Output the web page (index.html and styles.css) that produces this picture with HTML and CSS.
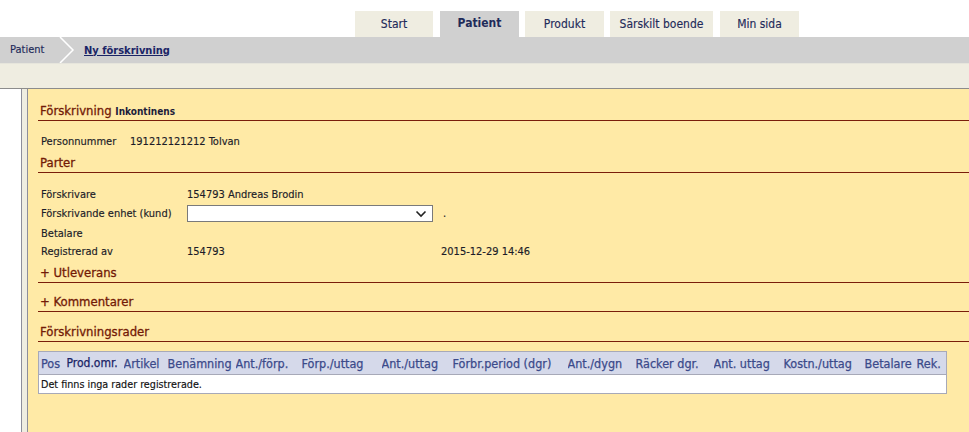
FILE: index.html
```html
<!DOCTYPE html>
<html lang="sv">
<head>
<meta charset="utf-8">
<title>Ny förskrivning</title>
<link rel="stylesheet" href="styles.css">
</head>
<body>
<div class="top">
  <nav class="tabs">
    <a class="tab tab-start">Start</a>
    <a class="tab tab-active">Patient</a>
    <a class="tab">Produkt</a>
    <a class="tab tab-wide">Särskilt boende</a>
    <a class="tab">Min sida</a>
  </nav>
</div>
<div class="crumbs">
  <span class="crumb">Patient</span>
  <svg class="chev" width="16" height="26" viewBox="0 0 16 26"><polyline points="1,0 14,13 1,26" fill="none" stroke="#ffffff" stroke-width="1.5"/></svg>
  <a class="crumb-current">Ny förskrivning</a>
</div>
<div class="subbar"></div>
<div class="main">
  <div class="leftcol"></div>
  <div class="panel">
    <div class="head head-first"><span class="head-title">Förskrivning</span> <span class="head-sub">Inkontinens</span></div>
    <div class="row row-person"><span class="lbl lbl-short">Personnummer</span><span>191212121212 Tolvan</span></div>
    <div class="head head-parter"><span class="head-title">Parter</span></div>
    <div class="grid">
      <div class="row"><span class="lbl">Förskrivare</span><span>154793 Andreas Brodin</span></div>
      <div class="row row-select"><span class="lbl">Förskrivande enhet (kund)</span>
        <span class="selwrap"><select class="sel"><option></option></select>
          <svg class="selarrow" width="12" height="8" viewBox="0 0 12 8"><polyline points="1.5,1.5 6,6 10.5,1.5" fill="none" stroke="#222" stroke-width="1.6"/></svg>
        </span><span class="dot">.</span></div>
      <div class="row"><span class="lbl">Betalare</span></div>
      <div class="row"><span class="lbl">Registrerad av</span><span class="val-mid">154793</span><span>2015-12-29 14:46</span></div>
    </div>
    <div class="head head-utl"><span class="head-title">+ Utleverans</span></div>
    <div class="head head-kom"><span class="head-title">+ Kommentarer</span></div>
    <div class="head head-rader"><span class="head-title">Förskrivningsrader</span></div>
    <table class="tbl">
      <colgroup>
        <col style="width:28px"><col style="width:57px"><col style="width:44px"><col style="width:68px"><col style="width:66px"><col style="width:80px"><col style="width:71px"><col style="width:115px"><col style="width:68px"><col style="width:78px"><col style="width:70px"><col style="width:81px"><col style="width:52px"><col>
      </colgroup>
      <thead>
        <tr><th>Pos</th><th class="th-small">Prod.omr.</th><th>Artikel</th><th>Benämning</th><th>Ant./förp.</th><th>Förp./uttag</th><th>Ant./uttag</th><th>Förbr.period (dgr)</th><th>Ant./dygn</th><th>Räcker dgr.</th><th>Ant. uttag</th><th>Kostn./uttag</th><th>Betalare</th><th>Rek.</th></tr>
      </thead>
      <tbody>
        <tr><td colspan="14">Det finns inga rader registrerade.</td></tr>
      </tbody>
    </table>
  </div>
</div>
</body>
</html>
```
FILE: styles.css
```css
html, body {
  margin: 0;
  padding: 0;
  background: #ffffff;
  font-family: "DejaVu Sans Condensed", "DejaVu Sans", sans-serif;
  font-stretch: condensed;
  font-size: 11px;
  color: #1c1c28;
  height: 432px;
  overflow: hidden;
}
.top {
  height: 37px;
  display: flex;
  align-items: flex-end;
}
.tabs {
  display: flex;
  gap: 6px;
  margin-left: 355px;
}
.tab {
  width: 79px;
  height: 26px;
  background: #efede1;
  color: #1f2b5a;
  font-size: 12px;
  display: flex;
  align-items: center;
  justify-content: center;
  -webkit-text-stroke: 0.15px #1f2b5a;
}
.tab-start { width: 78px; margin-right: 1px; }
.tab-wide { width: 103px; margin-right: 1px; }
.tab-active {
  background: #d0d0d0;
  font-weight: bold;
  align-items: flex-start;
  padding-top: 5px;
  height: 21px;
  -webkit-text-stroke: 0;
}
.crumbs {
  height: 26px;
  background: #d0d0d0;
  display: flex;
  align-items: center;
  border-bottom: 1px solid #e6e5dc;
}
.crumb {
  margin-left: 10px;
  color: #1f2b5a;
  width: 50px;
  margin-top: -2px;
  -webkit-text-stroke: 0.15px #1f2b5a;
}
.chev {
  display: block;
  margin-left: -1px;
}
.crumb-current {
  margin-left: 9px;
  font-weight: bold;
  font-size: 11px;
  color: #1a2466;
  text-decoration: underline;
}
.subbar {
  height: 24px;
  background: #efede1;
  border-bottom: 1px solid #8c8c8c;
}
.main {
  display: flex;
  background: #efede1;
  height: 344px;
  gap: 5px;
}
.leftcol {
  width: 21px;
  background: #ffffff;
  border-right: 1px solid #8d8d9a;
}
.panel {
  flex: 1;
  background: #ffeaa6;
  border-left: 1px solid #8d8d9a;
  padding-left: 10px;
  -webkit-text-stroke: 0.15px currentColor;
}
.head {
  height: 16px;
  line-height: 16px;
  padding: 0 0 1px 2px;
  border-bottom: 1px solid #7a1e0a;
  font-size: 13px;
  white-space: nowrap;
}
.head-title {
  color: #731a06;
  font-size: 13px;
  -webkit-text-stroke: 0.3px #731a06;
}
.head-sub {
  font-size: 10px;
  font-weight: bold;
  color: #1c1c3a;
  -webkit-text-stroke: 0;
}
.head-first { margin-top: 14px; }
.row {
  display: flex;
  align-items: center;
  height: 18px;
  padding-left: 3px;
}
.row-person { margin-top: 11px; }
.head-parter { margin-top: 5px; }
.grid { margin-top: 12px; margin-bottom: 5px; }
.lbl { width: 146px; flex: none; }
.lbl-short { width: 89px; }
.row-select { height: 21px; }
.selwrap {
  position: relative;
  display: block;
  width: 246px;
  height: 17px;
}
.sel {
  appearance: none;
  -webkit-appearance: none;
  width: 246px;
  height: 17px;
  margin: 0;
  border: 1px solid #7a7a7a;
  background: #ffffff;
  border-radius: 0;
  display: block;
}
.selarrow {
  position: absolute;
  right: 6px;
  top: 5px;
}
.dot { margin-left: 10px; }
.val-mid { width: 254px; flex: none; }
.head-kom { margin-top: 11px; }
.head-rader { margin-top: 12px; }
.tbl {
  margin-top: 9px;
  width: 909px;
  table-layout: fixed;
  border-collapse: collapse;
  border: 1px solid #a7a9b8;
  background: #ffffff;
}
.tbl th {
  background: #d5d9ea;
  color: #3b4a8a;
  font-weight: normal;
  font-size: 12.5px;
  text-align: left;
  height: 22px;
  padding: 0;
  white-space: nowrap;
  overflow: hidden;
  border-bottom: 1px solid #a7a9b8;
  -webkit-text-stroke: 0.25px #3b4a8a;
}
.tbl th:first-child, .tbl td:first-child { padding-left: 2px; }
.tbl .th-small { font-size: 12px; color: #1a2466; -webkit-text-stroke: 0.25px #1a2466; }
.tbl td {
  height: 18px;
  padding: 0;
  color: #111111;
  font-size: 10.7px;
}
```
